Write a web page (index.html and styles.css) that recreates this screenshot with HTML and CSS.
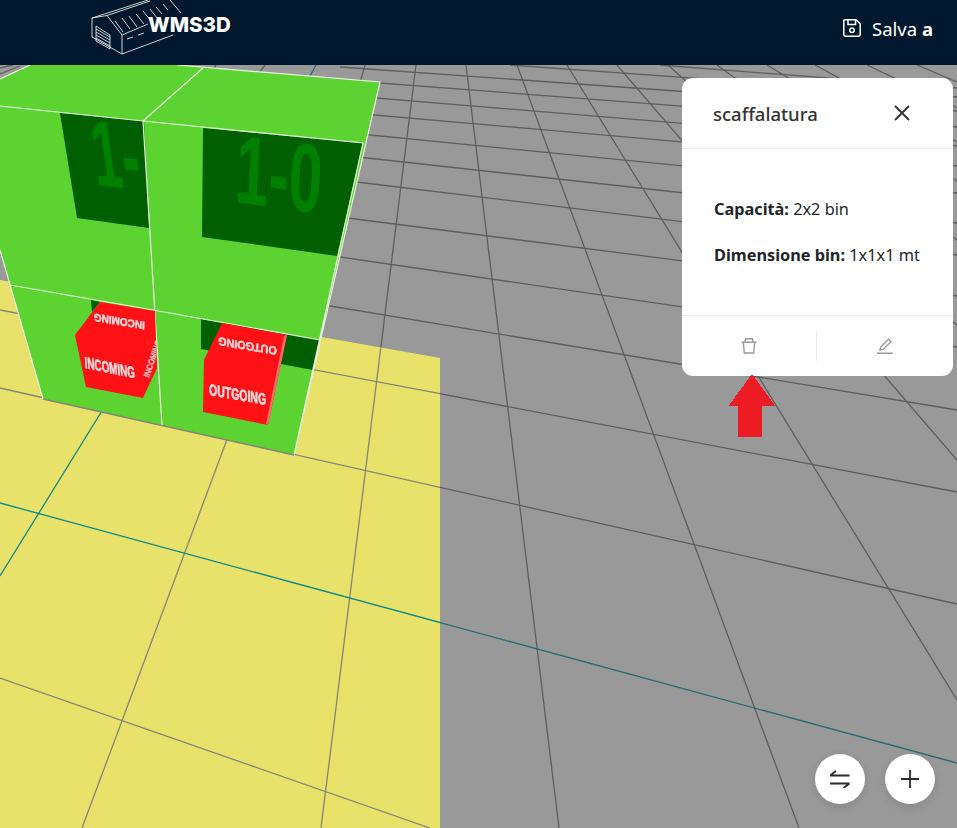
FILE: index.html
```html
<!doctype html>
<html lang="it">
<head>
	<meta charset="utf-8">
	<title>WMS3D</title>
	<link rel="stylesheet" href="styles.css">
</head>
<body>
	<header class="topbar">
		<div class="brand">
			<svg class="brand-mark" width="100" height="56" viewBox="88 0 100 56">
				<path d="M92 18 148 0M92 18 107 15.500M107 15.500 150 1M92 18V37L122 54V35L107 15.500M122 54 173 35M122 35 148 24"/>
				<path d="M96 26V41L110 49V35ZM96 29 110 37M96 32 110 40M96 35 110 43M96 38 110 46"/>
				<path d="M115 21 123 32M122 18 130 29M129 16 137 27M136 14 144 24M143 11 151 21M150 9 157 18M156 7 162 14M163 4 168 10M170 0 181 13"/>
				<path d="M127 39 133 37M138 35 144 33"/>
			</svg>
			<span class="brand-name">WMS3D</span>
		</div>
		<a class="save" href="#">
			<svg width="18" height="18" viewBox="0 0 18 18">
				<path d="M1.700 .8H13L17.200 4.800V15.800A1.400 1.400 0 0 1 15.800 17.200H2.200A1.400 1.400 0 0 1 .8 15.800V1.700A.9 .9 0 0 1 1.700 .8Z"/>
				<path d="M5 1V5.500H12.500V1"/>
				<circle cx="9" cy="11.200" r="2.200"/>
			</svg>
			<span>Salva <b>a</b></span>
		</a>
	</header>

	<main class="scene">
		<svg class="floor" width="957" height="763" viewBox="0 65 957 763">
			<defs>
				<clipPath id="on-yellow"><polygon points="0,280 440,358 440,828 0,828"/></clipPath>
				<clipPath id="cell-left"><polygon points="60,113 144,121 149,228 77,218"/></clipPath>
				<clipPath id="cell-right"><polygon points="203,128 363,143 337,256 202,237"/></clipPath>
				<clipPath id="cube-left"><polygon points="100,302 155,311 157,368 143,398 86,387 75,335"/></clipPath>
				<g id="grid">
					<line x1="660" y1="65" x2="957" y2="88"/>
					<line x1="510" y1="65" x2="957" y2="97"/>
					<line x1="340" y1="67" x2="957" y2="111"/>
					<line x1="340" y1="80" x2="957" y2="127"/>
					<line x1="340" y1="95" x2="957" y2="146"/>
					<line x1="340" y1="112" x2="957" y2="166"/>
					<line x1="340" y1="132" x2="957" y2="193"/>
					<line x1="340" y1="155" x2="957" y2="223"/>
					<line x1="340" y1="180" x2="957" y2="255"/>
					<line x1="340" y1="217" x2="957" y2="296"/>
					<line x1="320" y1="254" x2="957" y2="347"/>
					<line x1="300" y1="301" x2="957" y2="410"/>
					<line x1="0" y1="310" x2="957" y2="492"/>
					<line x1="0" y1="388" x2="957" y2="604"/>
					<line x1="0" y1="678" x2="430" y2="828"/>
					<line x1="216" y1="65" x2="212" y2="72"/>
					<line x1="265" y1="65" x2="259" y2="73"/>
					<line x1="365" y1="65" x2="358" y2="90"/>
					<line x1="416" y1="65" x2="321" y2="828"/>
					<line x1="466" y1="65" x2="559" y2="828"/>
					<line x1="517" y1="65" x2="799" y2="828"/>
					<line x1="567" y1="65" x2="957" y2="700"/>
					<line x1="617" y1="65" x2="957" y2="460"/>
					<line x1="668" y1="65" x2="957" y2="325"/>
					<line x1="717" y1="65" x2="957" y2="240"/>
					<line x1="767" y1="65" x2="957" y2="181"/>
					<line x1="815" y1="65" x2="957" y2="142"/>
					<line x1="867" y1="65" x2="957" y2="108"/>
					<line x1="917" y1="65" x2="957" y2="82"/>
					<line x1="235" y1="418" x2="82" y2="828"/>
					<line x1="0" y1="68" x2="13" y2="65"/>
					<line x1="0" y1="74" x2="20" y2="66"/>
				</g>
				<g id="axes">
					<line x1="0" y1="503" x2="957" y2="763"/>
					<line x1="113" y1="393" x2="0" y2="576"/>
					<line x1="316" y1="65" x2="310" y2="76"/>
				</g>
			</defs>

			<use href="#grid" class="grid-line"/>
			<use href="#axes" class="axis-line"/>
			<polygon class="yellow" points="0,280 440,358 440,828 0,828"/>
			<use href="#grid" class="grid-line on-yellow" clip-path="url(#on-yellow)"/>
			<use href="#axes" class="axis-line on-yellow" clip-path="url(#on-yellow)"/>

			<!-- shelf -->
			<polygon class="green" points="30,65 177,65 380,82 294,455 43,399 0,250 0,79"/>
			<polygon class="dark" points="60,113 144,121 149,228 77,218"/>
			<polygon class="dark" points="203,128 363,143 337,256 202,237"/>
			<polygon class="dark" points="91,300 100,302 92,312"/>
			<polygon class="dark" points="201,319 320,340 313,370 201,349"/>
			<g clip-path="url(#cell-left)">
				<text class="shelf-code" transform="matrix(.53 .05 .13 .94 96 185)">1-</text>
			</g>
			<g clip-path="url(#cell-right)">
				<text class="shelf-code" transform="matrix(.6 .08 -.05 .97 234 202)">1-0</text>
			</g>
			<path class="edge" d="M30 65 0 79M177 65 380 82 294 455M0 106 143 121 363 143 294 455M143 121 203 68M143 121 162 426M0 250 43 399M10 285 153 310 320 340"/>
			<line class="base" x1="43" y1="399" x2="294" y2="455"/>

			<!-- cubes -->
			<polygon class="cube" points="100,302 155,311 157,368 143,398 86,387 75,335"/>
			<polygon class="cube" points="222,323 287,335 268,425 203,412 204,360"/>
			<polygon class="cube-side" points="287,335 284,336 266,424 268,425"/>
			<g class="cube-labels">
				<text transform="matrix(-1 -.17 .05 -1.100 145 322)">INCOMING</text>
				<text transform="matrix(.98 .2 .1 1.600 85 368)">INCOMING</text>
				<text transform="matrix(-1.080 -.18 .05 -1.150 277 347)">OUTGOING</text>
				<text transform="matrix(1.050 .18 0 1.600 209 395)">OUTGOING</text>
				<g clip-path="url(#cube-left)">
					<text class="squeezed" transform="matrix(.24 -.72 .8 .3 149 378)">INCOMING</text>
				</g>
			</g>
		</svg>

		<aside class="card">
			<div class="card-head">
				<h2>scaffalatura</h2>
				<button class="icon-btn" type="button" aria-label="Chiudi">
					<svg width="16" height="16" viewBox="0 0 16 16"><path d="M1 1 15 15M15 1 1 15"/></svg>
				</button>
			</div>
			<div class="card-body">
				<p><b>Capacità:</b> 2x2 bin</p>
				<p><b>Dimensione bin:</b> 1x1x1 mt</p>
			</div>
			<div class="card-foot">
				<button class="icon-btn" type="button" aria-label="Elimina">
					<svg width="16" height="16" viewBox="0 0 16 16"><path d="M.5 4.200H15.500M2.300 4.200 3.300 15H12.700L13.700 4.200M4 4.200 4.500 .8H11.500L12 4.200"/></svg>
				</button>
				<button class="icon-btn" type="button" aria-label="Modifica">
					<svg width="16" height="16" viewBox="0 0 16 16"><path d="M0 15.300H16M3 12 3.600 9 11.500 1.200 14 3.700 6 11.400Z"/></svg>
				</button>
			</div>
		</aside>

		<svg class="pointer" width="48" height="64" viewBox="0 0 48 64">
			<polygon points="24,0 47.500,32 34,32 34,63 10,63 10,32 .5,32"/>
		</svg>

		<div class="fabs">
			<button class="fab" type="button" aria-label="Scambia">
				<svg width="20" height="18" viewBox="0 0 20 18"><path d="M0 5.500H19.500M0 5.500 6 1M0 13.500H19.500M19.500 13.500 13.500 18"/></svg>
			</button>
			<button class="fab" type="button" aria-label="Aggiungi">
				<svg width="20" height="20" viewBox="0 0 20 20"><path d="M1 10H19M10 1V19"/></svg>
			</button>
		</div>
	</main>
</body>
</html>
```

FILE: styles.css
```css
* {
	box-sizing: border-box;
}

html, body {
	height: 100%;
}

body {
	margin: 0;
	display: flex;
	flex-direction: column;
	overflow: hidden;
	font-family: "Noto Sans", "Open Sans", sans-serif;
	color: #212529;
}

.topbar {
	flex: 0 0 65px;
	display: flex;
	justify-content: space-between;
	align-items: center;
	padding: 0 24px 0 88px;
	background: #00182e;
	color: #fff;
}

.brand {
	display: flex;
	align-self: flex-start;
}

.brand-mark {
	fill: none;
	stroke: #fff;
	stroke-width: .8;
}

.brand-name {
	margin: 12px 0 0 -40px;
	font: 800 20.500px/26px Inter, "Liberation Sans", sans-serif;
}

.save {
	display: flex;
	align-items: center;
	gap: 11px;
	margin-bottom: 9px;
	color: #fff;
	text-decoration: none;
	font-size: 18.500px;
}

.save svg {
	fill: none;
	stroke: #fff;
	stroke-width: 1.500;
}

.scene {
	flex: 1;
	position: relative;
	background: #999;
}

.floor {
	display: block;
}

.grid-line {
	stroke: #5f5f5f;
	stroke-width: 1.300;
}

.grid-line.on-yellow {
	stroke: #87857a;
}

.axis-line {
	stroke: #2b6d70;
	stroke-width: 1.300;
}

.axis-line.on-yellow {
	stroke: #0a8a8c;
}

.yellow {
	fill: #e8e16a;
}

.green {
	fill: #5cd331;
}

.dark {
	fill: #005f00;
}

.shelf-code {
	fill: #008000;
	font: bold 100px "Liberation Sans", sans-serif;
}

.edge {
	fill: none;
	stroke: #e9f5e3;
	stroke-width: 1.200;
}

.base {
	stroke: #87857a;
	stroke-width: 1.400;
}

.cube {
	fill: #ff1116;
}

.cube-side {
	fill: #ff6a6a;
	filter: blur(.5px);
}

.cube-labels {
	fill: #f8dede;
	stroke: #f8dede;
	stroke-width: .35;
	font: bold 10px "Liberation Sans", sans-serif;
	filter: blur(.5px);
}

.squeezed {
	opacity: .85;
}

.card {
	position: absolute;
	top: 13px;
	right: 4px;
	width: 271px;
	height: 298px;
	display: flex;
	flex-direction: column;
	background: #fff;
	border-radius: 11px;
}

.card-head {
	flex: 0 0 71px;
	display: flex;
	justify-content: space-between;
	align-items: center;
	padding: 0 43px 0 31px;
	border-bottom: 1px solid #ececec;
}

.card-head h2 {
	margin: 0;
	font-size: 18.500px;
	font-weight: 500;
	color: #333;
}

.card-head .icon-btn {
	stroke: #333;
	stroke-width: 1.800;
}

.card-body {
	flex: 1;
	padding: 48px 0 0 32px;
	font-size: 16.300px;
	line-height: 24px;
}

.card-body p {
	margin: 0 0 22px;
	white-space: nowrap;
}

.card-foot {
	flex: 0 0 61px;
	display: grid;
	grid-template-columns: 134px 1fr;
	padding: 15px 0;
	border-top: 1px solid #ececec;
}

.card-foot .icon-btn {
	stroke: #999;
	stroke-width: 1.400;
}

.card-foot .icon-btn + .icon-btn {
	border-left: 1px solid #ececec;
}

.icon-btn {
	padding: 0;
	display: flex;
	justify-content: center;
	align-items: center;
	border: 0;
	background: none;
	fill: none;
}

.pointer {
	position: absolute;
	top: 309px;
	left: 728px;
	fill: #ed1c24;
	shape-rendering: crispEdges;
}

.fabs {
	position: absolute;
	right: 22px;
	bottom: 24px;
	display: flex;
	gap: 20px;
}

.fab {
	width: 50px;
	height: 50px;
	padding: 0;
	display: flex;
	justify-content: center;
	align-items: center;
	border: 0;
	border-radius: 50%;
	background: #fff;
	box-shadow: 0 3px 10px rgba(0, 0, 0, .12);
	fill: none;
	stroke: #2b2b2b;
	stroke-width: 1.800;
}
```
